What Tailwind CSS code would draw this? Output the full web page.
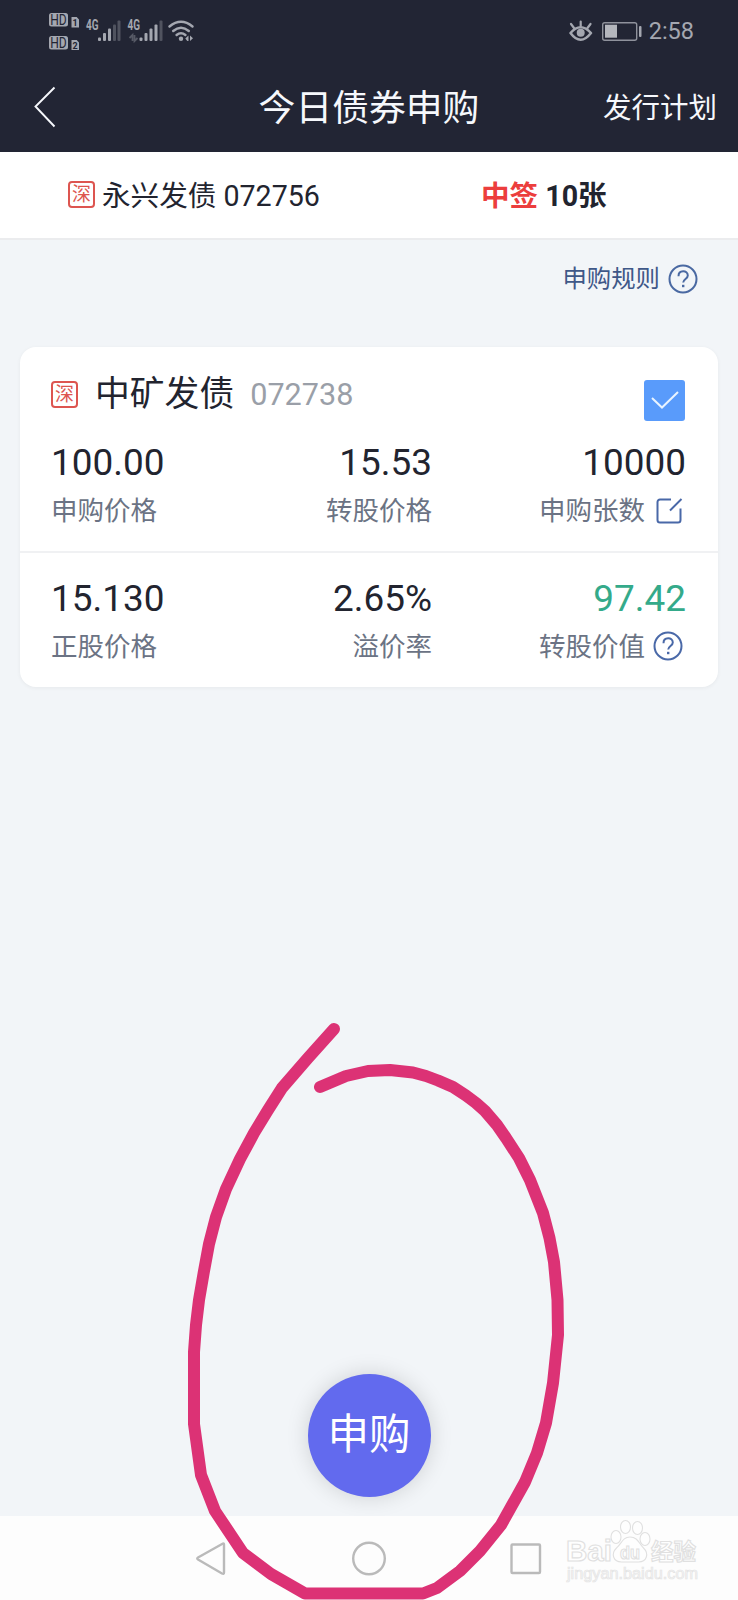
<!DOCTYPE html>
<html lang="zh-CN">

<head>
  <meta charset="UTF-8" />
  <meta name="viewport" content="width=device-width, initial-scale=1.0" />
  <title>今日债券申购</title>
  <script src="https://cdn.jsdelivr.net/npm/@tailwindcss/browser@4"></script>
</head>

<body class="bg-[#f2f5f8] font-['Roboto','Noto_Sans_CJK_SC',sans-serif] text-[#22242f]">

  <div class="relative flex h-[1600px] w-[738px] flex-col overflow-hidden">

    <!-- Status bar -->
    <div class="flex h-[62px] shrink-0 items-start justify-between bg-[#222534] pl-12 pr-11">
      <svg class="h-[62px] w-[150px]" viewBox="48 0 150 62" fill="#a4a7b0">
        <rect x="49" y="13" width="19" height="13.500" rx="2.500" />
        <rect x="49" y="36" width="19" height="13.500" rx="2.500" />
        <g fill="#222534" font-size="14.500" text-anchor="middle">
          <text x="58.500" y="25" textLength="16.500" lengthAdjust="spacingAndGlyphs">HD</text>
          <text x="58.500" y="48" textLength="16.500" lengthAdjust="spacingAndGlyphs">HD</text>
        </g>
        <path d="M71.500 17h5.200l2.300 2.500v8h-7.500zM71.500 40h5.200l2.300 2.500v7.500h-7.500z" />
        <g fill="#222534" font-size="9" font-weight="700" text-anchor="middle">
          <text x="75.200" y="25.700">1</text>
          <text x="75.200" y="48.700">2</text>
        </g>
        <g font-size="14" font-weight="700">
          <text x="86" y="30.300" textLength="12.500" lengthAdjust="spacingAndGlyphs">4G</text>
          <text x="127.500" y="30.300" textLength="12.500" lengthAdjust="spacingAndGlyphs">4G</text>
        </g>
        <rect x="98" y="37.500" width="3" height="3.500" rx="1" />
        <rect x="103" y="33" width="3" height="8" rx="1" />
        <rect x="108" y="28.500" width="3" height="12.500" rx="1" />
        <rect x="113" y="24.500" width="3" height="16.500" rx="1" fill="#50535f" />
        <rect x="117.500" y="20.500" width="3" height="20.500" rx="1" fill="#50535f" />
        <path d="M132.500 41v-6l-3 3M134.500 35v6l3-3" fill="none" stroke="#565965" stroke-width="1.800" />
        <rect x="139.500" y="37.500" width="3" height="3.500" rx="1" />
        <rect x="144.500" y="33" width="3" height="8" rx="1" />
        <rect x="149.500" y="28.500" width="3" height="12.500" rx="1" />
        <rect x="154.500" y="24.500" width="3" height="16.500" rx="1" />
        <rect x="159.500" y="20.500" width="3" height="20.500" rx="1" fill="#50535f" />
        <g fill="none" stroke="#a4a7b0" stroke-width="2.500" stroke-linecap="round">
          <path d="M169.500 26.500q11.500-9.500 23 0M173.200 31q7.800-6.500 15.600 0M176.600 35q4.400-3.600 8.800 0" />
        </g>
        <circle cx="181" cy="38.800" r="2.200" />
        <path d="M188.500 35.500v5.500h-1.200l-2-2.500zM190 35.500v5.500l3-2.800z" />
      </svg>
      <div class="flex h-[62px] items-center gap-2">
        <svg class="h-[62px] w-[74px]" viewBox="569 0 74 62" fill="none" stroke="#a4a7b0">
          <path d="M570.500 33q10-11.500 20.500 0q-10.500 13.500-20.500 0z" stroke-width="2.500" stroke-linejoin="round" />
          <path d="M580.700 26v-4.500M574 28l-3-4M587.500 28l3-4" stroke-width="2.200" stroke-linecap="round" />
          <circle cx="580.700" cy="32.800" r="4" fill="#a4a7b0" stroke="none" />
          <rect x="602.700" y="22.700" width="34" height="17.600" rx="2" stroke-width="1.400" stroke="#8f929c" />
          <rect x="605" y="24.700" width="12" height="13" fill="#b4b6bd" stroke="none" />
          <rect x="639" y="26" width="2.500" height="11" rx="1" fill="#a4a7b0" stroke="none" />
        </svg>
        <span class="-ml-[2px] mt-[2px] text-[23.500px] text-[#a4a7b0]">2:58</span>
      </div>
    </div>

    <!-- Header -->
    <header class="grid h-[90px] shrink-0 grid-cols-3 items-center bg-[#222534] text-[#f6f8fc]">
      <svg class="ml-[33px] h-11 w-6" viewBox="0 0 24 44" fill="none" stroke="currentColor" stroke-width="1.900">
        <path d="M21.500 2.500L2.500 21.500l19 20" />
      </svg>
      <h1 class="pt-[5px] text-center text-[36.800px] leading-none whitespace-nowrap">今日债券申购</h1>
      <a class="pt-[5px] pr-[21px] text-right text-[28.500px] leading-none">发行计划</a>
    </header>

    <!-- Lottery result -->
    <div class="flex h-[88px] shrink-0 items-center border-b-2 border-[#ebecee] bg-white pt-[2px] text-[28.600px] leading-none">
      <div class="flex w-[413px] items-center pl-[68px]">
        <span class="mr-[7px] -mt-[4px] flex size-[27px] items-center justify-center rounded-[4px] border-2 border-[#dd5550] text-[19px] leading-none text-[#dd5550]">深</span>
        <span class="whitespace-nowrap">永兴发债 072756</span>
      </div>
      <div class="pl-[68px] font-bold whitespace-nowrap"><span class="text-[#ec3e3d]">中签</span> 10张</div>
    </div>

    <!-- Rules link -->
    <div class="flex h-[107px] shrink-0 items-start justify-end gap-2 pt-[24px] pr-[40px] text-[#3f5888]">
      <span class="mt-[3px] text-[24.400px] leading-none">申购规则</span>
      <svg class="size-[30px]" viewBox="0 0 30 30" fill="none" stroke="#4a69a2" stroke-width="2">
        <circle cx="15" cy="15" r="13.500" />
        <path d="M10.500 12.200c0-6.500 9.300-6.200 9.300-.8c0 3.600-4.600 3.500-4.600 7.200" />
        <path d="M15.200 20.800v2.400" stroke-width="2.400" />
      </svg>
    </div>

    <!-- Bond card -->
    <section class="mx-5 flex h-[340px] shrink-0 flex-col rounded-2xl bg-white shadow-[0_1px_4px_rgba(0,0,0,0.05)]">
      <div class="flex h-[206px] shrink-0 flex-col border-b-2 border-[#f0f1f3] pr-[32px] pl-[31px]">
        <div class="flex h-[91px] items-center pt-1">
          <span class="mr-[17px] flex size-[27px] items-center justify-center rounded-[4px] border-2 border-[#dd5550] text-[19px] leading-none text-[#dd5550]">深</span>
          <h2 class="text-[34.800px] leading-none">中矿发债</h2>
          <span class="mt-[2px] ml-[16px] text-[30.600px] leading-none text-[#9a9fa8]">072738</span>
          <span class="mt-[11px] mr-px ml-auto flex size-[41px] items-center justify-center rounded-[3px] bg-[#599bfb]">
            <svg class="h-5 w-7" viewBox="0 0 28 20" fill="none" stroke="#e9f4ff" stroke-width="2">
              <path d="M1 8l10 9.500L27 2" />
            </svg>
          </span>
        </div>
        <div class="grid grid-cols-[150px_231px_254px]">
          <div>
            <p class="h-[51px] text-[36.900px] leading-[49px]">100.00</p>
            <p class="text-[26.500px] leading-[44px] text-[#6b7384]">申购价格</p>
          </div>
          <div class="text-right">
            <p class="h-[51px] text-[36.900px] leading-[49px]">15.53</p>
            <p class="text-[26.500px] leading-[44px] text-[#6b7384]">转股价格</p>
          </div>
          <div class="text-right">
            <p class="h-[51px] text-[36.900px] leading-[49px]">10000</p>
            <p class="flex items-center justify-end gap-[10px] pr-[3px] text-[26.500px] leading-[44px] text-[#6b7384]">申购张数
              <svg class="size-[28px]" viewBox="0 0 28 28" fill="none" stroke="#4968a8" stroke-width="2">
                <path d="M16 2.500H5a2.500 2.500 0 0 0-2.500 2.500v18a2.500 2.500 0 0 0 2.500 2.500h18a2.500 2.500 0 0 0 2.500-2.500V11.500" />
                <path d="M15 13.500L26.500 2" />
              </svg>
            </p>
          </div>
        </div>
      </div>
      <div class="grid grid-cols-[150px_231px_254px] pt-[21px] pr-[32px] pl-[31px]">
        <div>
          <p class="h-[51px] text-[36.900px] leading-[49px]">15.130</p>
          <p class="text-[26.500px] leading-[44px] text-[#6b7384]">正股价格</p>
        </div>
        <div class="text-right">
          <p class="h-[51px] text-[36.900px] leading-[49px]">2.65%</p>
          <p class="text-[26.500px] leading-[44px] text-[#6b7384]">溢价率</p>
        </div>
        <div class="text-right">
          <p class="h-[51px] text-[36.900px] leading-[49px] text-[#34aa8a]">97.42</p>
          <p class="flex items-center justify-end gap-[8px] pr-[3px] text-[26.500px] leading-[44px] text-[#6b7384]">转股价值
            <svg class="-mt-[2px] size-[30px]" viewBox="0 0 30 30" fill="none" stroke="#4a69a8" stroke-width="2">
              <circle cx="15" cy="15" r="13.500" />
              <path d="M10.500 12.200c0-6.500 9.300-6.200 9.300-.8c0 3.600-4.600 3.500-4.600 7.200" />
              <path d="M15.200 20.800v2.400" stroke-width="2.400" />
            </svg>
          </p>
        </div>
      </div>
    </section>

    <!-- Apply button -->
    <main class="flex flex-1 items-end justify-center pb-[19px]">
      <button class="size-[123px] rounded-full bg-[#626aee] pb-[2px] text-[41.500px] leading-none text-white shadow-[0_0_22px_rgba(0,0,0,0.15)]">申购</button>
    </main>

    <!-- System navigation -->
    <nav class="flex h-[84px] shrink-0 bg-[#fdfdfd]">
      <svg class="h-[84px] w-[560px]" viewBox="0 1516 560 84" fill="none" stroke="#bababa" stroke-width="2.400" stroke-linejoin="round">
        <path d="M223 1543.500Q224 1543 224 1544.500V1572.500Q224 1574.500 222 1573.500L198 1559.500Q196.500 1558.500 198 1557.500z" />
        <circle cx="369" cy="1558.500" r="15.800" />
        <rect x="511.500" y="1544.500" width="28.500" height="28.500" rx="1" />
      </svg>
      <!-- Watermark -->
      <svg class="h-[84px] w-[160px]" viewBox="560 1516 160 84" fill="#fefefe" stroke="#e0e0e0" stroke-width="1.100">
        <text x="566" y="1561" font-family="Liberation Sans" font-size="29" font-weight="700" textLength="46" lengthAdjust="spacingAndGlyphs">Bai</text>
        <ellipse cx="616" cy="1537" rx="5" ry="6.500" />
        <ellipse cx="625.500" cy="1527" rx="5" ry="6.500" />
        <ellipse cx="637.500" cy="1528" rx="5" ry="6.500" />
        <ellipse cx="645" cy="1539" rx="5" ry="6.500" />
        <path d="M630 1537c8 0 9 7 13.500 11c6 6 3 14-5 14h-17c-8 0-11-8-5-14c5-4 6-11 13.500-11z" />
        <text x="620" y="1559" font-family="Liberation Sans" font-size="19" font-weight="700" textLength="20" lengthAdjust="spacingAndGlyphs">du</text>
        <text x="651" y="1560" font-family="Noto Sans CJK SC" font-size="23" font-weight="700" textLength="45" lengthAdjust="spacingAndGlyphs">经验</text>
        <text x="567" y="1579" font-family="Liberation Sans" font-size="16" fill="#f8f8f8" stroke="#e4e4e4" stroke-width="0.700" textLength="131" lengthAdjust="spacingAndGlyphs">jingyan.baidu.com</text>
      </svg>
    </nav>

    <!-- Hand-drawn circle over the button -->
    <svg class="pointer-events-none absolute inset-0 h-[1600px] w-[738px]" viewBox="0 0 738 1600" fill="none" stroke="#dc3275" stroke-width="12" stroke-linecap="round" stroke-linejoin="round">
      <path d="M334 1029L308 1058L282 1088L268 1110L254 1133L240 1159L226 1189L216 1217L209 1244L204 1271L199 1300L196 1325L194 1352V1424L201 1475L215 1511L243 1553L271 1574L305 1593.500H423L437 1588L460 1571L480 1551L501 1525L525 1482L537 1453L546 1423L553 1383L558 1335L557.500 1300L554 1262L549.500 1238L543 1213L530 1180L519 1158L506 1138L497 1125L485 1111L476 1103L466 1095.500L453 1087L438 1080.500L426 1076L413 1072.500L390 1070L368 1071L346 1076L320 1087" />
    </svg>
  </div>

</body>

</html>
